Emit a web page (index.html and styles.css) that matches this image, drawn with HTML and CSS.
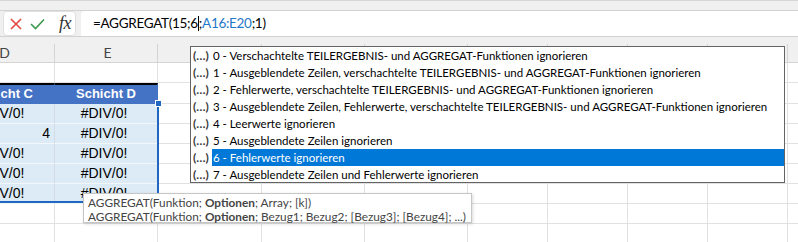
FILE: index.html
```html
<!DOCTYPE html>
<html lang="de">
<head>
    <meta charset="UTF-8">
    <title>AGGREGAT</title>
    <link rel="stylesheet" href="styles.css">
</head>
<body>

    <!-- Rand der Multifunktionsleiste -->
    <div class="ribbon-edge"></div>

    <!-- Bearbeitungsleiste -->
    <div class="formula-row">
        <div class="fx-box">
            <svg class="fx-icon" width="14" height="14" viewBox="0 0 14 14">
                <path d="M2 2 L12 12 M12 2 L2 12" stroke="#e2473f" stroke-width="1.6" fill="none"/>
            </svg>
            <svg class="fx-icon" width="15" height="12" viewBox="0 0 15 12">
                <path d="M1 6 L5.5 10.5 L14 1.5" stroke="#3d9a4d" stroke-width="1.6" fill="none"/>
            </svg>
            <span class="fx-text">fx</span>
        </div>
        <div class="formula-input">
            =AGGREGAT(15;6<span class="caret"></span>;<span class="ref">A16:E20</span>;1)
        </div>
    </div>
    <div class="formula-gap"></div>

    <!-- Tabelle -->
    <div class="sheet">
        <div class="row colhead">
            <div class="cell">D</div><div class="cell">E</div><div class="cell">F</div><div class="cell">G</div><div class="cell">H</div><div class="cell">I</div><div class="cell">J</div><div class="cell">K</div><div class="cell">L</div><div class="cell">M</div><div class="cell">N</div>
        </div>
        <div class="row">
            <div class="cell"></div><div class="cell"></div><div class="cell"></div><div class="cell"></div><div class="cell"></div><div class="cell"></div><div class="cell"></div><div class="cell"></div><div class="cell"></div><div class="cell"></div><div class="cell"></div>
        </div>
        <div class="row tall">
            <div class="cell th">Schicht C</div><div class="cell th">Schicht D</div><div class="cell"></div><div class="cell"></div><div class="cell"></div><div class="cell"></div><div class="cell"></div><div class="cell"></div><div class="cell"></div><div class="cell"></div><div class="cell"></div>
        </div>
        <div class="row">
            <div class="cell td err">#DIV/0!</div><div class="cell td err">#DIV/0!</div><div class="cell"></div><div class="cell"></div><div class="cell"></div><div class="cell"></div><div class="cell"></div><div class="cell"></div><div class="cell"></div><div class="cell"></div><div class="cell"></div>
        </div>
        <div class="row">
            <div class="cell td num">4</div><div class="cell td err">#DIV/0!</div><div class="cell"></div><div class="cell"></div><div class="cell"></div><div class="cell"></div><div class="cell"></div><div class="cell"></div><div class="cell"></div><div class="cell"></div><div class="cell"></div>
        </div>
        <div class="row">
            <div class="cell td err">#DIV/0!</div><div class="cell td err">#DIV/0!</div><div class="cell"></div><div class="cell"></div><div class="cell"></div><div class="cell"></div><div class="cell"></div><div class="cell"></div><div class="cell"></div><div class="cell"></div><div class="cell"></div>
        </div>
        <div class="row">
            <div class="cell td err">#DIV/0!</div><div class="cell td err">#DIV/0!</div><div class="cell"></div><div class="cell"></div><div class="cell"></div><div class="cell"></div><div class="cell"></div><div class="cell"></div><div class="cell"></div><div class="cell"></div><div class="cell"></div>
        </div>
        <div class="row">
            <div class="cell td err">#DIV/0!</div><div class="cell td err">#DIV/0!</div><div class="cell"></div><div class="cell"></div><div class="cell"></div><div class="cell"></div><div class="cell"></div><div class="cell"></div><div class="cell"></div><div class="cell"></div><div class="cell"></div>
        </div>
        <div class="row">
            <div class="cell"></div><div class="cell"></div><div class="cell"></div><div class="cell"></div><div class="cell"></div><div class="cell"></div><div class="cell"></div><div class="cell"></div><div class="cell"></div><div class="cell"></div><div class="cell"></div>
        </div>
        <div class="row">
            <div class="cell"></div><div class="cell"></div><div class="cell"></div><div class="cell"></div><div class="cell"></div><div class="cell"></div><div class="cell"></div><div class="cell"></div><div class="cell"></div><div class="cell"></div><div class="cell"></div>
        </div>
    </div>

    <!-- Markierung des Bezugs A16:E20 -->
    <div class="ref-range"></div>
    <div class="ref-handle"></div>

    <!-- Auswahlliste der Optionen -->
    <div class="dropdown">
        <div class="item"><span class="icon">(…)</span><span class="label">0 - Verschachtelte TEILERGEBNIS- und AGGREGAT-Funktionen ignorieren</span></div>
        <div class="item"><span class="icon">(…)</span><span class="label">1 - Ausgeblendete Zeilen, verschachtelte TEILERGEBNIS- und AGGREGAT-Funktionen ignorieren</span></div>
        <div class="item"><span class="icon">(…)</span><span class="label">2 - Fehlerwerte, verschachtelte TEILERGEBNIS- und AGGREGAT-Funktionen ignorieren</span></div>
        <div class="item"><span class="icon">(…)</span><span class="label">3 - Ausgeblendete Zeilen, Fehlerwerte, verschachtelte TEILERGEBNIS- und AGGREGAT-Funktionen ignorieren</span></div>
        <div class="item"><span class="icon">(…)</span><span class="label">4 - Leerwerte ignorieren</span></div>
        <div class="item"><span class="icon">(…)</span><span class="label">5 - Ausgeblendete Zeilen ignorieren</span></div>
        <div class="item selected"><span class="icon">(…)</span><span class="label">6 - Fehlerwerte ignorieren</span></div>
        <div class="item"><span class="icon">(…)</span><span class="label">7 - Ausgeblendete Zeilen und Fehlerwerte ignorieren</span></div>
    </div>

    <!-- Syntax-Hinweis -->
    <div class="tooltip">
        <div>AGGREGAT(Funktion; <b>Optionen</b>; Array; [k])</div>
        <div>AGGREGAT(Funktion; <b>Optionen</b>; Bezug1; Bezug2; [Bezug3]; [Bezug4]; ...)</div>
    </div>

</body>
</html>
```

FILE: styles.css
```css
body {
    margin: 0;
    width: 798px;
    height: 242px;
    overflow: hidden;
    position: relative;
    background-color: #fff;
    font-family: Lato, "Noto Sans", sans-serif;
}

.ribbon-edge {
    height: 9px;
    background-color: #f0f0f0;
    border-top: 1px solid #d6d6d6;
}

.formula-row {
    display: flex;
    height: 25px;
    background-color: #f0f0f0;
    border-top: 1px solid #d2d2d2;
    border-bottom: 1px solid #d2d2d2;
}

.fx-box {
    display: flex;
    align-items: center;
    width: 73px;
    margin-left: 3px;
    box-sizing: border-box;
    background-color: #fff;
    border: 1px solid #e0e0e0;
    border-radius: 4px;
    padding-left: 5px;
}

.fx-icon {
    margin-right: 7px;
}

.fx-text {
    font-family: "Liberation Serif", serif;
    font-style: italic;
    font-size: 18px;
    color: #333;
    margin-left: 7px;
    letter-spacing: -0.5px;
}

.formula-input {
    flex: 1;
    margin-left: 5px;
    background-color: #fff;
    border-top-left-radius: 4px;
    padding-left: 12px;
    font-size: 13.5px;
    letter-spacing: -0.3px;
    line-height: 25px;
    color: #000;
}

.caret {
    display: inline-block;
    width: 1px;
    height: 15px;
    background-color: #000;
    vertical-align: -3px;
}

.ref {
    color: #1f78c8;
}

.formula-gap {
    height: 7px;
    background-color: #f0f0f0;
}

/* Zellen */
.sheet {
    margin-left: -48px;
    font-family: "Liberation Sans", Arial, sans-serif;
    font-size: 14px;
}

.row {
    display: grid;
    grid-template-columns: 103px 103px 104px 103px 103px 80px 80px 80px 80px 80px 80px;
}

.cell {
    height: 20px;
    box-sizing: border-box;
    border-right: 1px solid #e1e1e1;
    border-bottom: 1px solid #e1e1e1;
    line-height: 19px;
    white-space: nowrap;
    overflow: hidden;
}

.colhead .cell {
    height: 19px;
    background-color: #f0f0f0;
    border-right-color: #d4d4d4;
    border-bottom-color: #d4d4d4;
    text-align: center;
    padding-left: 3px;
    font-family: Lato, sans-serif;
    font-size: 14px;
    line-height: 18px;
    color: #444;
}

.tall .cell {
    height: 21px;
}

.th {
    background-color: #4472c4;
    border-top: 2px solid #000;
    border-right-color: #4472c4 !important;
    border-bottom-color: #4472c4 !important;
    color: #fff;
    font-weight: bold;
    font-size: 13px;
    text-align: center;
    line-height: 18px;
}

.td {
    background-color: #ddebf7;
    border-bottom-color: #f2f7fc;
    border-right-color: #d3dce6;
}

.err {
    text-align: center;
    padding-right: 4px;
}

.num {
    text-align: right;
    padding-right: 4px;
}

/* Bezugsrahmen */
.ref-range {
    position: absolute;
    left: -10px;
    top: 103px;
    width: 169px;
    height: 100px;
    box-sizing: border-box;
    border-right: 2px solid #2067c2;
    border-bottom: 2px solid #2067c2;
}

.ref-handle {
    position: absolute;
    left: 155px;
    top: 100px;
    width: 5px;
    height: 5px;
    background-color: #2067c2;
    border: 1px solid #fff;
}

/* Auswahlliste */
.dropdown {
    position: absolute;
    left: 190px;
    top: 46px;
    width: 595px;
    height: 137px;
    box-sizing: border-box;
    background-color: #fff;
    border: 1px solid #646464;
    font-size: 11.5px;
    color: #000;
}

.item {
    display: flex;
    height: 17px;
    line-height: 17px;
    white-space: nowrap;
}

.icon {
    width: 19px;
    padding-left: 2px;
    font-size: 12px;
    font-weight: bold;
    color: #3a3a3a;
}

.label {
    flex: 1;
    padding-left: 1px;
}

.item.selected .label {
    background-color: #0078d7;
    color: #fff;
}

/* Hinweis */
.tooltip {
    position: absolute;
    left: 83px;
    top: 193px;
    width: 389px;
    height: 30px;
    box-sizing: border-box;
    padding: 2px 4px 0;
    background-color: #fff;
    border: 1px solid #c6c6c6;
    box-shadow: 1px 1px 3px rgba(0, 0, 0, 0.15);
    font-size: 11.8px;
    line-height: 14px;
    color: #444;
    white-space: nowrap;
}
```
